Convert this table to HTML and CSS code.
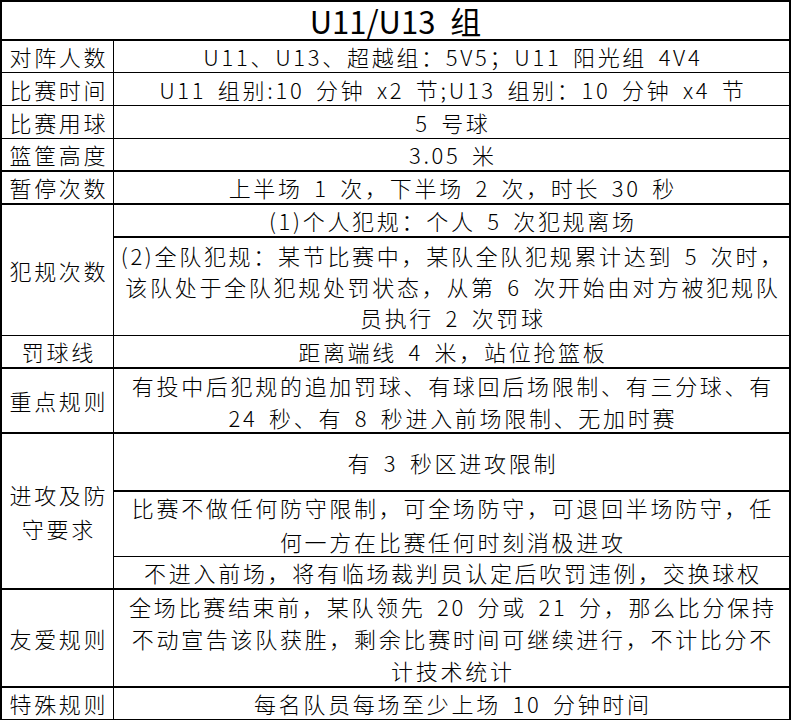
FILE: index.html
```html
<!DOCTYPE html>
<html lang="zh-CN">
<head>
<meta charset="utf-8">
<title>U11/U13 组</title>
<link rel="stylesheet" href="styles.css">
</head>
<body>
<div class="sheet">
  <div class="title">U11/U13 组</div>

  <div class="row b1">
    <div class="label">对阵人数</div>
    <div class="value"><div class="cell h31">U11、U13、超越组：5V5；U11 阳光组 4V4</div></div>
  </div>

  <div class="row b1">
    <div class="label">比赛时间</div>
    <div class="value"><div class="cell h32">U11 组别:10 分钟 x2 节;U13 组别：10 分钟 x4 节</div></div>
  </div>

  <div class="row b1">
    <div class="label">比赛用球</div>
    <div class="value"><div class="cell h32">5 号球</div></div>
  </div>

  <div class="row b2">
    <div class="label">篮筐高度</div>
    <div class="value"><div class="cell h31">3.05 米</div></div>
  </div>

  <div class="row b2">
    <div class="label">暂停次数</div>
    <div class="value"><div class="cell h31">上半场 1 次，下半场 2 次，时长 30 秒</div></div>
  </div>

  <div class="row b1">
    <div class="label">犯规次数</div>
    <div class="value">
      <div class="cell h31 b2">(1)个人犯规：个人 5 次犯规离场</div>
      <div class="cell h97 lh31">(2)全队犯规：某节比赛中，某队全队犯规累计达到 5 次时，<br>该队处于全队犯规处罚状态，从第 6 次开始由对方被犯规队<br>员执行 2 次罚球</div>
    </div>
  </div>

  <div class="row b2">
    <div class="label">罚球线</div>
    <div class="value"><div class="cell h31">距离端线 4 米，站位抢篮板</div></div>
  </div>

  <div class="row b2">
    <div class="label">重点规则</div>
    <div class="value"><div class="cell h63 lh32">有投中后犯规的追加罚球、有球回后场限制、有三分球、有<br>24 秒、有 8 秒进入前场限制、无加时赛</div></div>
  </div>

  <div class="row b2">
    <div class="label lh34">进攻及防<br>守要求</div>
    <div class="value">
      <div class="cell h56 b2">有 3 秒区进攻限制</div>
      <div class="cell h64 lh34 b1">比赛不做任何防守限制，可全场防守，可退回半场防守，任<br>何一方在比赛任何时刻消极进攻</div>
      <div class="cell h31">不进入前场，将有临场裁判员认定后吹罚违例，交换球权</div>
    </div>
  </div>

  <div class="row b2">
    <div class="label">友爱规则</div>
    <div class="value"><div class="cell h96 lh32">全场比赛结束前，某队领先 20 分或 21 分，那么比分保持<br>不动宣告该队获胜，剩余比赛时间可继续进行，不计比分不<br>计技术统计</div></div>
  </div>

  <div class="row b1">
    <div class="label">特殊规则</div>
    <div class="value"><div class="cell h30">每名队员每场至少上场 10 分钟时间</div></div>
  </div>
</div>
</body>
</html>
```

FILE: styles.css
```css
* {
  box-sizing: border-box;
}

html, body {
  margin: 0;
  padding: 0;
  background: #ffffff;
}

body {
  font-family: "Noto Sans CJK SC", "Noto Sans", sans-serif;
  color: #000000;
}

.sheet {
  width: 791px;
  border-top: 2px solid #000;
  border-left: 2px solid #000;
  border-right: 2px solid #000;
  display: flex;
  flex-direction: column;
}

.title {
  height: 39px;
  border-bottom: 2px solid #000;
  display: flex;
  align-items: center;
  justify-content: center;
  font-size: 31px;
  line-height: 37px;
  word-spacing: 8px;
  font-weight: 400;
}

.row {
  display: grid;
  grid-template-columns: 112px 1fr;
}

.label {
  border-right: 1px solid #000;
  display: flex;
  align-items: center;
  justify-content: center;
  text-align: center;
  font-size: 22px;
  font-weight: 300;
  letter-spacing: 2.7px;
  padding-left: 2.7px;
  line-height: 31px;
}

.value {
  display: flex;
  flex-direction: column;
}

.cell {
  display: flex;
  align-items: center;
  justify-content: center;
  text-align: center;
  font-size: 22px;
  font-weight: 300;
  letter-spacing: 2.7px;
  word-spacing: 4px;
  padding-left: 2.7px;
  line-height: 31px;
  white-space: nowrap;
}

.b1 { border-bottom: 1px solid #000; }
.b2 { border-bottom: 2px solid #000; }

.h30 { height: 30px; }
.h31 { height: 31px; }
.h32 { height: 32px; }
.h56 { height: 56px; }
.h63 { height: 63px; }
.h64 { height: 64px; }
.h96 { height: 96px; }
.h97 { height: 97px; }

.cell.b1.h64 { height: 65px; }
.cell.b2.h31 { height: 33px; }
.cell.b2.h56 { height: 58px; }

.lh31 { line-height: 31px; }
.lh32 { line-height: 32px; }
.lh34 { line-height: 34px; }
```
